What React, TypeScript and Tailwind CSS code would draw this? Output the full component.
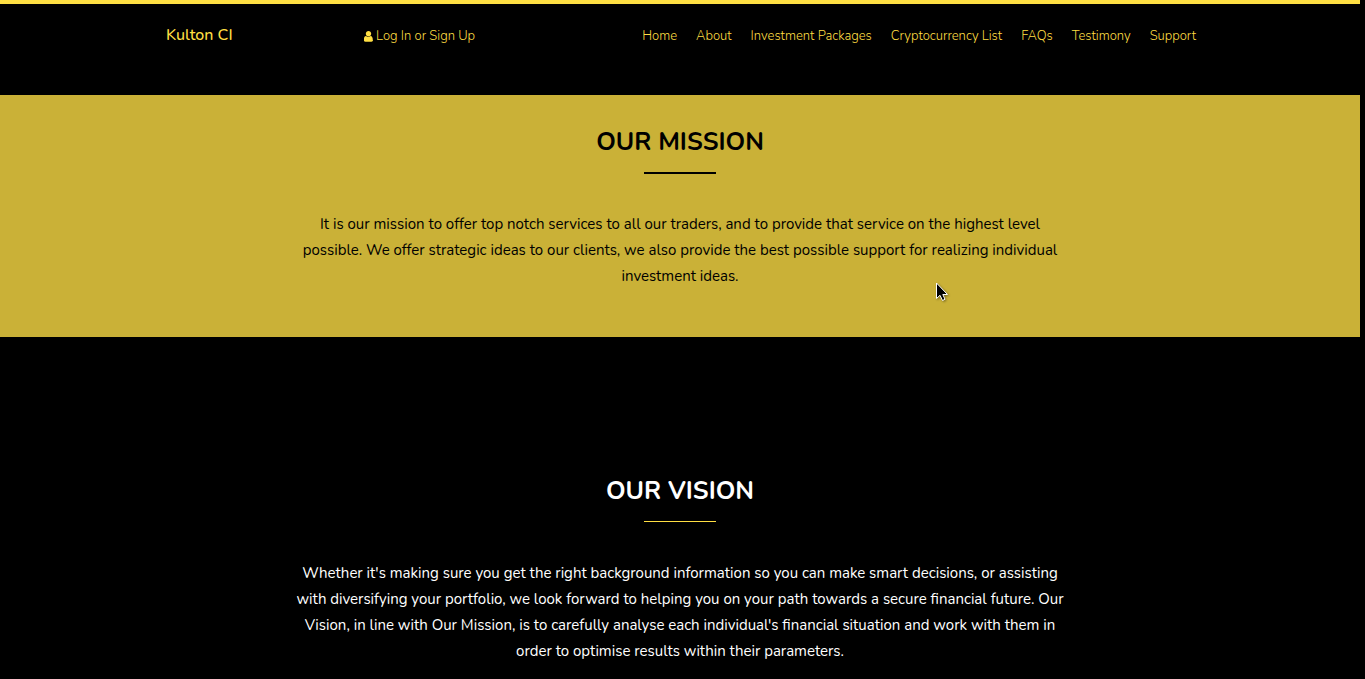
import React from "react";

const links = ["Home", "About", "Investment Packages", "Cryptocurrency List", "FAQs", "Testimony", "Support"];

function UserIcon() {
  return (
    <svg className="h-[11px] w-[9px]" viewBox="256 128 1280 1536" preserveAspectRatio="none" fill="currentColor" aria-hidden="true">
      <path d="M1536 1399q0 109-62.5 172t-166 63h-854q-104 0-166.500-63t-62.500-172q0-85 8.500-160.500t31.500-152 58.500-131 94-89 134.500-34.500q131 128 313 128t313-128q76 0 134.500 34.500t94 89 58.500 131 31.500 152 8.500 160.500zM1280 512q0 159-112.500 271.500t-271.500 112.500-271.500-112.500-112.500-271.500 112.500-271.500 271.500-112.500 271.500 112.500 112.500 271.500z" />
    </svg>
  );
}

function Pointer() {
  return (
    <svg className="pointer-events-none absolute top-[187px] left-1/2 ml-[256px] h-5 w-[14px] drop-shadow-[1px_1px_1px_rgba(0,0,0,0.4)]" viewBox="0 0 14 20" aria-hidden="true">
      <path d="M.5 1v15.500l3.500-3.200 2.500 5.200 2.500-1.200-2.200-4.800h4.700z" fill="#000" stroke="#fff" strokeWidth="1" />
    </svg>
  );
}

function Section({ title, dark, children }: { title: string; dark?: boolean; children: React.ReactNode }) {
  return (
    <section className={dark ? "bg-black pt-[138px] pb-12 text-white" : "relative bg-[#cab137] pt-[31px] pb-12 text-black"}>
      <h2 className="text-center text-[25px] leading-8 font-bold">{title}</h2>
      <hr className={dark ? "mx-auto mt-[14px] w-[72px] border-t border-[#ffdf43]" : "mx-auto mt-[14px] w-[72px] border-t-2 border-black"} />
      <p className={dark ? "mx-auto mt-[38px] max-w-[768px] text-center text-[15px] leading-[26px]" : "mx-auto mt-[37px] max-w-[768px] text-center text-[15px] leading-[26px]"}>{children}</p>
      {!dark && <Pointer />}
    </section>
  );
}

export default function App() {
  return (
    <div className="min-h-screen bg-black pr-[5px] font-['Nunito','Open_Sans',sans-serif]">
      <header className="border-t-4 border-[#ffdf43] bg-black text-[#ffdf43]">
        <nav className="mx-auto flex h-[91px] max-w-[1032px] items-start pt-5 text-[13px] leading-6 font-light">
          <a href="#" className="-mt-px w-[200px] pl-0.5 text-base font-medium">Kulton CI</a>
          <a href="#login" className="flex items-center gap-[3px]"><UserIcon />Log In or Sign Up</a>
          <ul className="ml-auto flex gap-[19px]">
            {links.map((l) => <li key={l}><a href={"#" + l}>{l}</a></li>)}
          </ul>
        </nav>
      </header>
      <main>
        <Section title="OUR MISSION">It is our mission to offer top notch services to all our traders, and to provide that service on the highest level possible. We offer strategic ideas to our clients, we also provide the best possible support for realizing individual investment ideas.</Section>
        <Section title="OUR VISION" dark>Whether it's making sure you get the right background information so you can make smart decisions, or assisting with diversifying your portfolio, we look forward to helping you on your path towards a secure financial future. Our Vision, in line with Our Mission, is to carefully analyse each individual's financial situation and work with them in order to optimise results within their parameters.</Section>
      </main>
    </div>
  );
}
